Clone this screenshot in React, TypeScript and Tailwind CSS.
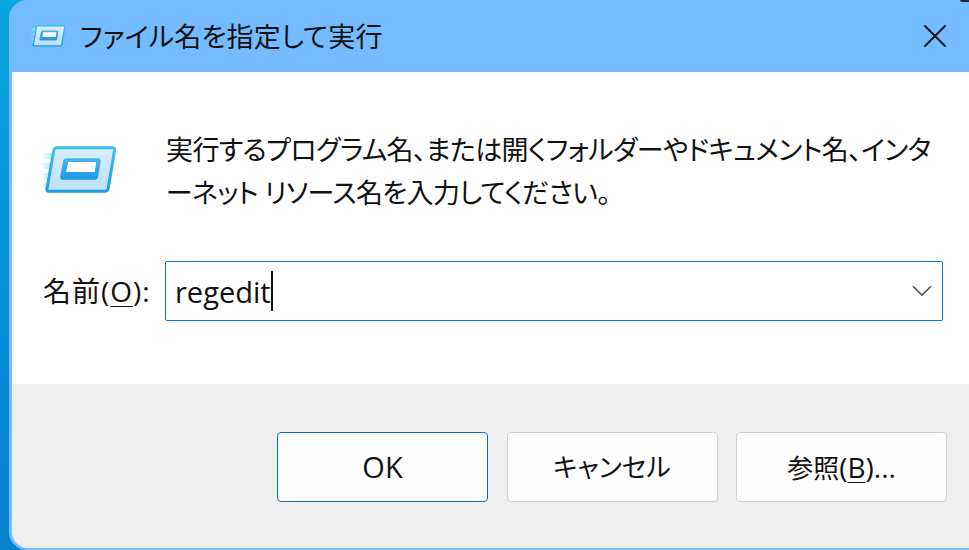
import { X, ChevronDown } from 'lucide-react';

const font = "font-['Open_Sans','Noto_Sans_CJK_JP',sans-serif] [font-feature-settings:'palt']";

function RunIcon({ id, className }: { id: string; className: string }) {
  return (
    <svg viewBox="0 0 76 48" className={className}>
      <defs>
        <linearGradient id={`${id}-streak`} x1="0" x2="1" y1="0" y2="0">
          <stop offset="0" stopColor="#a8dff9" stopOpacity="0" />
          <stop offset="1" stopColor="#a8dff9" />
        </linearGradient>
        <linearGradient id={`${id}-inner`} x1="0" x2="0" y1="0" y2="1">
          <stop offset="0" stopColor="#4fb4ec" />
          <stop offset="1" stopColor="#1d98e6" />
        </linearGradient>
        <linearGradient id={`${id}-panel`} x1="0" x2="0" y1="0" y2="1">
          <stop offset="0" stopColor="#d8effc" />
          <stop offset="1" stopColor="#bde0f8" />
        </linearGradient>
        <linearGradient id={`${id}-edge`} x1="0" x2="0" y1="0" y2="1">
          <stop offset="0" stopColor="#37c3f2" />
          <stop offset="1" stopColor="#1e9be8" />
        </linearGradient>
      </defs>
      <rect x="0" y="7" width="14" height="6" fill={`url(#${id}-streak)`} />
      <rect x="0" y="17" width="12" height="6" fill={`url(#${id}-streak)`} />
      <rect x="0" y="27" width="10" height="6" fill={`url(#${id}-streak)`} />
      <rect x="0" y="37" width="8" height="5" fill={`url(#${id}-streak)`} />
      <path d="M16 1.5 H72 Q75 1.5 74.6 4 L68 43 Q67.6 45.5 65 45.5 H8 Q5.5 45.5 6 43 L13 4 Q13.4 1.5 16 1.5 Z" fill={`url(#${id}-panel)`} stroke={`url(#${id}-edge)`} strokeWidth="3" />
      <path d="M26 12 H58 Q61 12 60.5 15 L58 30 Q57.5 34 54 34 H22 Q19 34 19.5 30 L22.5 15 Q23 12 26 12 Z" fill={`url(#${id}-inner)`} />
      <path d="M27.5 16 H56 L54.5 26 H25.5 Z" fill="#ffffff" />
    </svg>
  );
}

function Btn({ children, primary }: { children: React.ReactNode; primary?: boolean }) {
  return (
    <button className={`w-[211px] h-[70px] rounded-[4px] bg-[#fdfdfd] text-[26px] text-[#111] border-[1.5px] ${primary ? 'border-[#0f6cbd]' : 'border-[#cfcfcf]'}`}>
      {children}
    </button>
  );
}

export default function App() {
  return (
    <div className={`relative w-[969px] h-[550px] overflow-hidden pl-[9px] bg-gradient-to-b from-[#0aa5e3] to-[#0581cd] ${font}`}>
      <div className="h-full flex flex-col rounded-l-[18px] overflow-hidden bg-[#74bbff] pb-[2px]">
        <div className="h-[72px] shrink-0 flex items-center pl-[21px] pr-[14px]">
          <RunIcon id="small" className="w-[36px] h-[22px] shrink-0" />
          <span className="ml-[14px] text-[27px] leading-none text-[#111] whitespace-nowrap tracking-[0.2px]">ファイル名を指定して実行</span>
          <X className="ml-auto w-[40px] h-[40px] text-[#1a1a1a]" strokeWidth={1.2} />
        </div>
        <div className="flex-1 flex flex-col ml-[3px] rounded-bl-[16px] overflow-hidden">
          <div className="h-[312px] bg-white shrink-0 flex flex-col">
            <div className="flex pt-[56px] pl-[29px]">
              <RunIcon id="large" className="w-[75px] h-[48px] mt-[18px] shrink-0" />
              <p className="ml-[50px] text-[27px] leading-[43px] text-[#111] whitespace-nowrap tracking-[-0.62px]">
                実行するプログラム名、または開くフォルダーやドキュメント名、インタ
                <br />
                ーネット リソース名を入力してください。
              </p>
            </div>
            <div className="flex items-center mt-[47px] pl-[31px]">
              <span className="w-[122px] text-[28px] leading-none text-[#111] whitespace-nowrap tracking-[1px]">
                名前(<span className="underline underline-offset-4 decoration-1">O</span>):
              </span>
              <div className="w-[778px] h-[60px] rounded-[2px] border-[1.5px] border-[#0a7ad1] flex items-center pl-[9px]">
                <span className="text-[29px] leading-none text-[#111]">regedit</span>
                <span className="w-[2px] h-[40px] bg-[#111]" />
                <ChevronDown className="ml-auto mr-[3px] w-[34px] h-[34px] text-[#555]" strokeWidth={1.2} />
              </div>
            </div>
          </div>
          <div className="flex-1 bg-[#efefef] flex items-start justify-end gap-[18.5px] pt-[48px] pr-[22px]">
            <Btn primary><span className="text-[29px]">OK</span></Btn>
            <Btn>キャンセル</Btn>
            <Btn>
              参照<span className="text-[28px]">(<span className="underline underline-offset-4 decoration-1">B</span>)...</span>
            </Btn>
          </div>
        </div>
      </div>
      <div className="absolute top-0 right-0 w-[9px] h-[2px] rounded-bl-[8px] bg-[#1a2a3a]" />
    </div>
  );
}
